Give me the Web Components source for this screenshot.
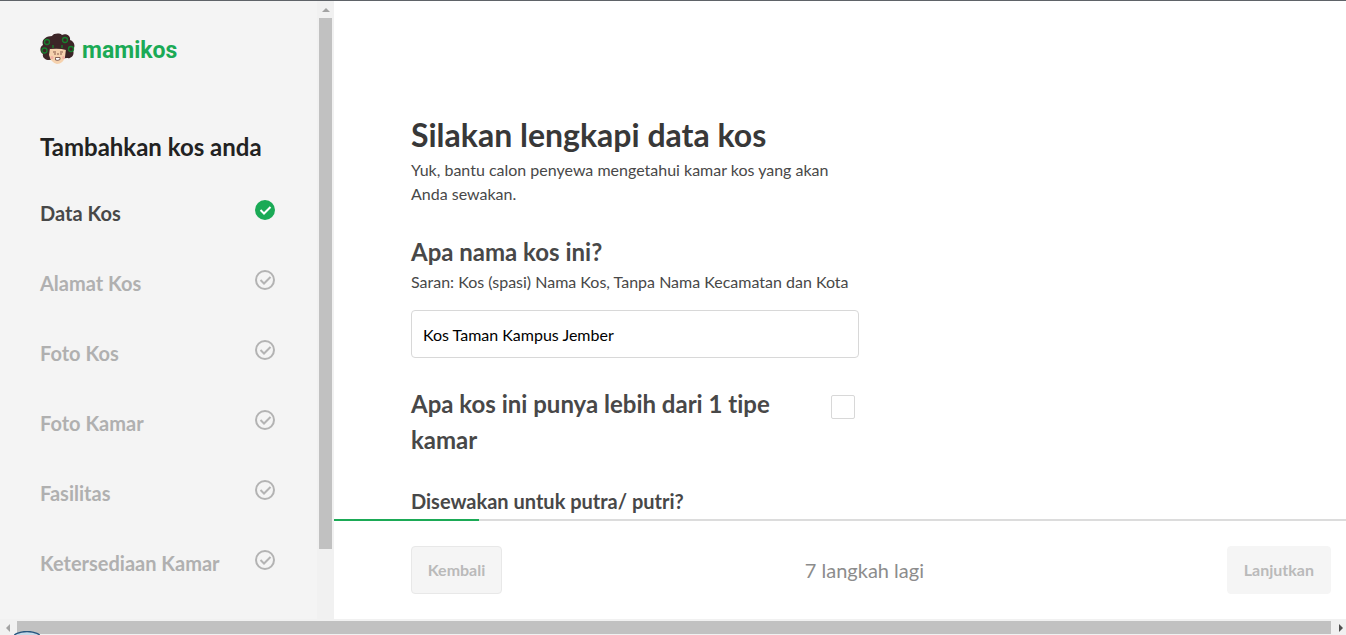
<!DOCTYPE html>
<html lang="id">
<head>
<meta charset="utf-8">
<title>Mamikos - Tambahkan kos anda</title>
<style>
html,body{height:100%;margin:0}
body{font-family:Lato,"Open Sans",sans-serif;font-size:16px;line-height:24px;font-variant-ligatures:none;color:#484848;background:#fff;overflow:hidden}
</style>
</head>
<body>
<kos-app></kos-app>
<script>
const define=(name,html,setup)=>customElements.define(name,class extends HTMLElement{
  connectedCallback(){
    if(this.shadowRoot)return;
    const t=document.createElement('template');
    t.innerHTML=html;
    this.attachShadow({mode:'open'}).append(t.content.cloneNode(true));
    if(setup)setup.call(this,this.shadowRoot);
  }
});

define('kos-logo',`
<style>
:host{display:block}
a{display:flex;align-items:flex-start;gap:7px;color:#1baa56;text-decoration:none;font:700 23px/36px Roboto,sans-serif}
svg{display:block;flex:none}
</style>
<a href="#" aria-label="mamikos"><svg width="35" height="32" viewBox="0 0 35 32" aria-hidden="true">
<path d="M12 3C14 0 20 0 22 2C26 0 31 3 30 7C34 8 36 13 33 17C35 22 31 26 27 25L9 27C5 27 2 24 3 21C-1 19 0 13 3 12C1 7 6 3 12 3Z" fill="#3c2527"/>
<path d="M10 15Q18 13 26 16L25 24Q23 31 17 31Q11 30 9 22Z" fill="#f6d2ae"/>
<path d="M10 12Q18 10 26 14V17Q20 15 10 16Z" fill="#3c2527"/>
<g fill="none" stroke="#17802e" stroke-width="1.3"><circle cx="7" cy="9" r="2.500"/><circle cx="25" cy="7" r="2.500"/><circle cx="4.500" cy="17.500" r="2.500"/><circle cx="31" cy="16" r="2.500"/><path d="M13 12v3M22 12v3"/></g>
<path d="M13 19h3M20 19h3M14 21h2M20 21h2M18 20v2" fill="none" stroke="#8a5d4c"/>
<path d="M15.500 24.500h4.500v2q-2 1.500-4.500.5z" fill="#fff" stroke="#6a433b" stroke-width=".8"/>
<circle cx="12" cy="24.500" r="1.500" fill="#f3b0a4"/><circle cx="23.500" cy="24.500" r="1.500" fill="#f3b0a4"/>
</svg><span>mamikos</span></a>`);

define('step-item',`
<style>
:host{display:block}
a{display:flex;justify-content:space-between;align-items:flex-start;height:70px;color:#b0b0b0;text-decoration:none;font-weight:700;font-size:20px;line-height:30px}
svg{display:block;flex:none;margin-top:2px}
circle{fill:none;stroke:#b3b3b3;stroke-width:2}
path{fill:none;stroke:#b3b3b3;stroke-width:2}
:host([active]) a{color:#484848}
:host([active]) circle{fill:#1baa56;stroke:#1baa56}
:host([active]) path{stroke:#fff}
</style>
<a href="#"><slot></slot><svg width="20" height="20" viewBox="0 0 20 20" aria-hidden="true"><circle cx="10" cy="10" r="9"/><path d="M5.500 10l3.500 3.500L15.500 7"/></svg></a>`,
function(r){if(this.hasAttribute('active'))r.querySelector('a').setAttribute('aria-current','step')});

define('scroll-rail',`
<style>
:host{display:flex;background:#f1f1f1;box-sizing:border-box}
:host([direction=vertical]){flex-direction:column;width:17px;padding:0 2px}
:host([direction=horizontal]){height:16px;padding:2px 0 1px}
svg{display:block;flex:none;width:17px;height:17px}
:host([direction=horizontal]) svg{width:17px;height:13px}
:host([direction=vertical]) svg{width:13px}
div{background:#c1c1c1;flex:1}
:host([direction=vertical]) div{flex:0 0 86%}
:host([direction=vertical]) .end{display:none}
.end{margin-right:-2px}
</style>
<svg class="start" viewBox="0 0 17 17"><path fill="#a3a3a3"/></svg><div></div><svg class="end" viewBox="0 0 17 13"><path d="M8 3l4 4-4 4z" fill="#505050"/></svg>`,
function(r){
  const s=r.querySelector('.start'),v=this.getAttribute('direction')==='vertical';
  s.setAttribute('viewBox',v?'0 0 13 17':'0 0 17 13');
  s.firstElementChild.setAttribute('d',v?'M3 11l4-4 4 4z':'M10 3L6 7l4 4z');
});

define('kos-sidebar',`
<style>
:host{display:flex;background:#f4f4f4;min-height:0;overflow:hidden}
.body{flex:1;min-width:0;padding:32px 42px 0 40px}
h1{margin:60px 0 33px;font-size:24px;line-height:36px;font-weight:700;color:#222}
</style>
<div class="body"><kos-logo></kos-logo><h1>Tambahkan kos anda</h1>
<nav aria-label="Langkah"><step-item active>Data Kos</step-item><step-item>Alamat Kos</step-item><step-item>Foto Kos</step-item><step-item>Foto Kamar</step-item><step-item>Fasilitas</step-item><step-item>Ketersediaan Kamar</step-item></nav></div>
<scroll-rail direction="vertical"></scroll-rail>`);

define('kos-form',`
<style>
:host{display:block;overflow:hidden;min-height:0}
form{max-width:448px;padding:111px 24px 0 77px}
h1,h2,h3,p{margin:0}
h1{font-size:32px;line-height:46px;font-weight:700;color:#383838}
h2{font-size:24px;line-height:36px;font-weight:700}
h3{font-size:20px;line-height:30px;font-weight:700}
.intro{max-width:424px;margin-bottom:28px}
.name{display:block;box-sizing:border-box;width:100%;height:48px;margin:16px 0 28px;padding:0 11px;border:1px solid #d8d8d8;border-radius:4px;background:#fff;font:inherit;color:#000;outline:0}
.row{display:flex;justify-content:space-between;align-items:flex-start;gap:40px;padding-right:4px;margin-bottom:28px}
.row input{appearance:none;flex:none;width:24px;height:24px;margin:9px 0 0;border:1px solid #d8d8d8;border-radius:2px;background:#fff}
</style>
<form>
<h1>Silakan lengkapi data kos</h1>
<p class="intro">Yuk, bantu calon penyewa mengetahui kamar kos yang akan Anda sewakan.</p>
<h2><label for="name">Apa nama kos ini?</label></h2>
<p id="hint">Saran: Kos (spasi) Nama Kos, Tanpa Nama Kecamatan dan Kota</p>
<input class="name" id="name" type="text" value="Kos Taman Kampus Jember" aria-describedby="hint">
<div class="row"><h2><label for="multi">Apa kos ini punya lebih dari 1 tipe kamar</label></h2><input id="multi" type="checkbox"></div>
<h3>Disewakan untuk putra/ putri?</h3>
</form>`);

define('kos-footer',`
<style>
:host{display:block;background:#fff}
.track{height:2px;background:#dcdcdc}
.track div{height:2px;width:calc(100% / 7);background:#1baa56}
.bar{display:flex;justify-content:space-between;align-items:center;padding:25px 15px 25px 77px}
button{box-sizing:border-box;height:48px;min-width:91px;padding:0 15px;border:1px solid #e8e8e8;border-radius:4px;background:#f5f5f5;color:#bababa;font:700 16px/24px Lato,sans-serif}
.next{border-color:#f5f5f5;padding:0 16px}
span{font-size:20px;line-height:30px;color:#8c8c8c}
</style>
<div class="track"><div></div></div>
<div class="bar"><button type="button" disabled>Kembali</button><span>7 langkah lagi</span><button class="next" type="button" disabled>Lanjutkan</button></div>`);

define('kos-app',`
<style>
:host{display:grid;box-sizing:border-box;height:100vh;grid-template:minmax(0,1fr) auto / 334px minmax(0,1fr);border-top:1px solid #5f6368;position:relative;overflow:hidden}
main{display:grid;grid-template-rows:minmax(0,1fr) auto;min-height:0}
.rail{grid-column:1 / -1}
.badge{position:absolute;left:14px;bottom:0;display:block}
</style>
<kos-sidebar></kos-sidebar>
<main><kos-form></kos-form><kos-footer></kos-footer></main>
<scroll-rail class="rail" direction="horizontal"></scroll-rail>
<svg class="badge" width="26" height="4" viewBox="0 0 26 4" aria-hidden="true"><ellipse cx="13" cy="7" rx="14" ry="6.500" fill="#c6d9e8" stroke="#28567f" stroke-width="1.300"/></svg>`);
</script>
</body>
</html>
